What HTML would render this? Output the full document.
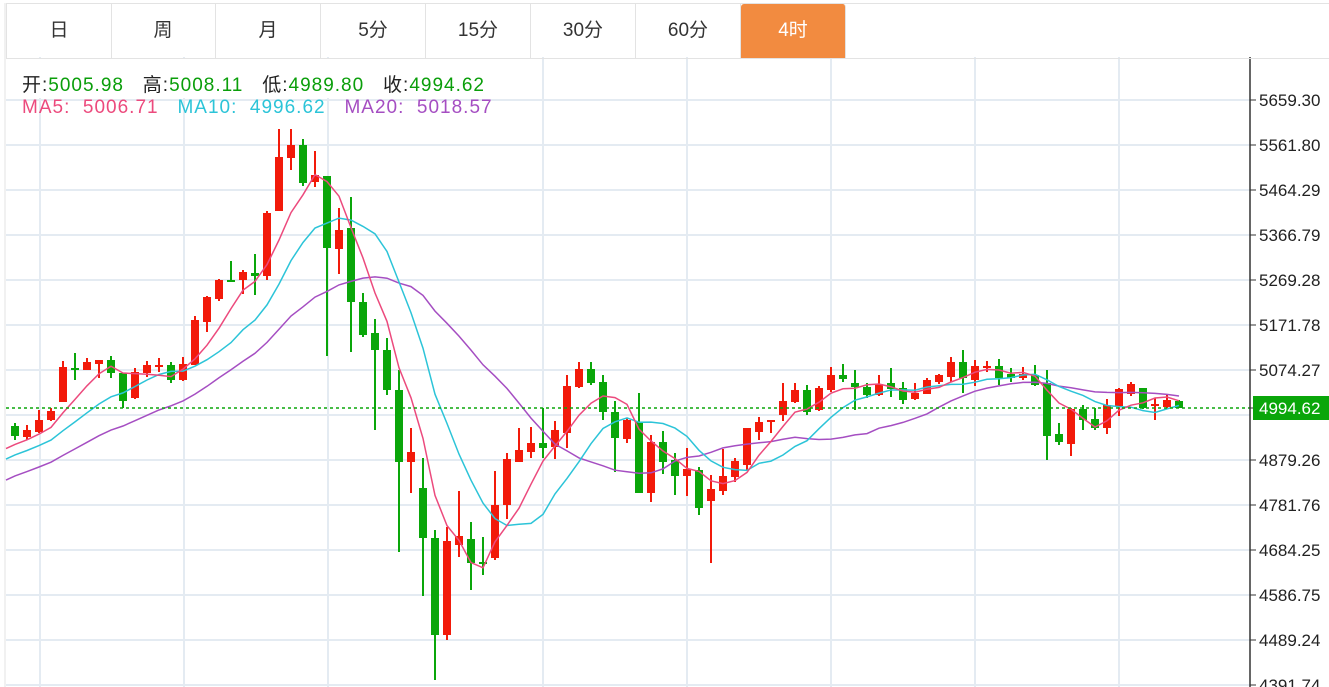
<!DOCTYPE html>
<html><head><meta charset="utf-8">
<style>
html,body{margin:0;padding:0;background:#fff;width:1329px;height:687px;overflow:hidden;font-family:"Liberation Sans","Noto Sans CJK SC",sans-serif;}
.tabs{position:absolute;left:6px;top:3px;height:54px;width:1323px;border-top:1px solid #e3e3e3;border-bottom:1px solid #e3e3e3;}
.tab{position:absolute;top:0;height:54px;width:104px;border-right:1px solid #e3e3e3;text-align:center;line-height:54px;font-size:19px;color:#333;}
.tab.act{background:#f28b40;color:#fff;border-radius:3px 3px 0 0;top:0;}
.leg{position:absolute;left:22px;font-size:19px;letter-spacing:1px;white-space:nowrap;}
#c{position:absolute;left:0;top:0;}
</style></head><body>
<svg id="c" width="1329" height="687" xmlns="http://www.w3.org/2000/svg"></svg>
<div class="tabs">
<div class="tab" style="left:0;border-left:1px solid #e3e3e3">日</div>
<div class="tab" style="left:105px">周</div>
<div class="tab" style="left:210px">月</div>
<div class="tab" style="left:315px">5分</div>
<div class="tab" style="left:420px">15分</div>
<div class="tab" style="left:525px">30分</div>
<div class="tab" style="left:630px">60分</div>
<div class="tab act" style="left:735px">4时</div>
</div>
<div class="leg" style="top:70px;color:#222">开:<span style="color:#0a9e0a">5005.98</span>&nbsp;&nbsp; 高:<span style="color:#0a9e0a">5008.11</span>&nbsp;&nbsp; 低:<span style="color:#0a9e0a">4989.80</span>&nbsp;&nbsp; 收:<span style="color:#0a9e0a">4994.62</span></div>
<div class="leg" style="top:97px"><span style="color:#ec4a7d">MA5:&nbsp; 5006.71</span>&nbsp;&nbsp; <span style="color:#2cc4d8">MA10:&nbsp; 4996.62</span>&nbsp;&nbsp; <span style="color:#a54ec2">MA20:&nbsp; 5018.57</span></div>
<script>
var d=[
[426,436,423,440,'G'],[430,437,425,440,'R'],[420,432,410,433,'R'],[411,420,408,421,'R'],[367,402,361,402,'R'],
[368,369,353,380,'G'],[362,370,358,370,'R'],[360,364,360,378,'R'],[360,373,356,378,'G'],[373,401,373,408,'G'],
[372,398,368,399,'R'],[365,373,361,377,'R'],[365,367,358,372,'R'],[365,380,362,383,'G'],[364,380,357,381,'R'],
[320,365,316,365,'R'],[297,322,296,332,'R'],[280,299,279,301,'R'],[280,282,261,282,'G'],[272,280,270,294,'R'],
[273,276,254,295,'G'],[213,276,211,280,'R'],[157,211,129,211,'R'],[145,158,129,170,'R'],[145,183,139,186,'G'],
[175,182,151,187,'R'],[176,248,176,356,'G'],[230,249,208,274,'R'],[228,302,197,352,'G'],[302,335,293,337,'G'],
[333,350,319,430,'G'],[350,390,338,395,'G'],[390,462,370,552,'G'],[452,462,428,493,'R'],[488,538,458,596,'G'],
[538,635,530,680,'G'],[541,635,527,640,'R'],[536,545,491,557,'R'],[539,563,522,590,'G'],[562,564,537,575,'G'],
[505,558,471,560,'R'],[459,505,453,519,'R'],[450,462,428,462,'R'],[443,452,427,458,'R'],[443,448,408,458,'G'],
[430,447,421,459,'R'],[386,433,375,448,'R'],[369,387,362,388,'R'],[369,383,362,385,'G'],[382,412,375,420,'G'],
[412,438,401,472,'G'],[420,439,418,443,'R'],[422,493,393,493,'G'],[442,493,435,502,'R'],[442,462,431,474,'G'],
[460,476,453,495,'G'],[469,476,448,496,'R'],[470,508,467,515,'G'],[489,501,475,563,'R'],[476,491,449,495,'R'],
[461,477,458,482,'R'],[428,465,428,470,'R'],[422,432,417,440,'R'],[420,422,420,433,'R'],[401,415,383,421,'R'],
[390,402,383,403,'R'],[390,412,385,415,'G'],[388,410,386,411,'R'],[375,390,367,392,'R'],[375,379,364,382,'G'],
[383,387,370,410,'G'],[387,395,383,398,'G'],[384,395,375,396,'R'],[383,389,368,397,'G'],[388,400,382,404,'G'],
[393,399,383,400,'R'],[380,394,378,394,'R'],[375,382,374,384,'R'],[362,377,357,382,'R'],[362,378,350,393,'G'],
[366,380,360,386,'R'],[366,368,361,372,'R'],[366,378,359,385,'G'],[374,378,368,382,'G'],[374,378,367,380,'R'],
[375,385,365,386,'G'],[383,436,370,460,'G'],[434,442,423,445,'G'],[409,444,408,456,'R'],[409,420,405,430,'G'],
[419,428,408,430,'G'],[405,428,399,434,'R'],[389,406,388,416,'R'],[384,394,382,396,'R'],[388,408,388,409,'G'],
[404,406,398,420,'R'],[400,407,395,408,'R'],[401,408,400,408,'G']];
var s='';
var ys=[100,145,190,235,280,325,370,415,460,505,550,595,640,685];
ys.forEach(function(y){s+='<line x1="6" x2="1250" y1="'+y+'" y2="'+y+'" stroke="#e4ebf2" stroke-width="2"/>';});
[40,184,328,543,687,831,975,1119].forEach(function(x){s+='<line x1="'+x+'" x2="'+x+'" y1="57" y2="687" stroke="#e4ebf2" stroke-width="2"/>';});
s+='<rect x="6" y="58" width="480" height="40" fill="#fff"/>';
s+='<line x1="5" x2="5" y1="3" y2="687" stroke="#e3e3e3"/>';
var cl=d.map(function(c){return c[4]=='R'?c[0]:c[1];});
var pre=[];for(var k=0;k<20;k++)pre.push(520-k*4.2);
var all=pre.concat(cl);
function ma(n,col){var pts=[];for(var i=-1;i<d.length;i++){var j=i+20,sum=0;for(var q=0;q<n;q++)sum+=all[j-q];var x=i<0?6:15+12*i;pts.push(x+','+(sum/n).toFixed(1));}
return '<polyline fill="none" stroke="'+col+'" stroke-width="1.5" points="'+pts.join(' ')+'"/>';}
d.forEach(function(c,i){var x=15+12*i,col=c[4]=='R'?'#f21a0a':'#0aa60a';
s+='<line x1="'+x+'" x2="'+x+'" y1="'+c[2]+'" y2="'+c[3]+'" stroke="'+col+'" stroke-width="2"/>';
s+='<rect x="'+(x-4)+'" y="'+c[0]+'" width="8" height="'+Math.max(2,c[1]-c[0])+'" fill="'+col+'"/>';});
s+=ma(20,'#a54ec2')+ma(10,'#2cc4d8')+ma(5,'#ec4a7d');
s+='<line x1="6" x2="1250" y1="408" y2="408" stroke="#0aa60a" stroke-width="1.5" stroke-dasharray="3,3"/>';
s+='<line x1="1250" x2="1250" y1="57" y2="687" stroke="#333" stroke-width="1.5"/>';
var lab=['5659.30','5561.80','5464.29','5366.79','5269.28','5171.78','5074.27',null,'4879.26','4781.76','4684.25','4586.75','4489.24','4391.74'];
ys.forEach(function(y,i){if(!lab[i])return;s+='<line x1="1250" x2="1256" y1="'+y+'" y2="'+y+'" stroke="#333"/>';
s+='<text x="1259" y="'+(y+6)+'" font-size="17" fill="#222" font-family="Liberation Sans,sans-serif">'+lab[i]+'</text>';});
s+='<line x1="1250" x2="1256" y1="408" y2="408" stroke="#333"/>';
s+='<rect x="1253" y="396" width="76" height="24" fill="#0aa60a"/><text x="1259" y="414" font-size="17" fill="#fff" font-family="Liberation Sans,sans-serif">4994.62</text>';
document.getElementById('c').innerHTML=s;
</script>
</body></html>
